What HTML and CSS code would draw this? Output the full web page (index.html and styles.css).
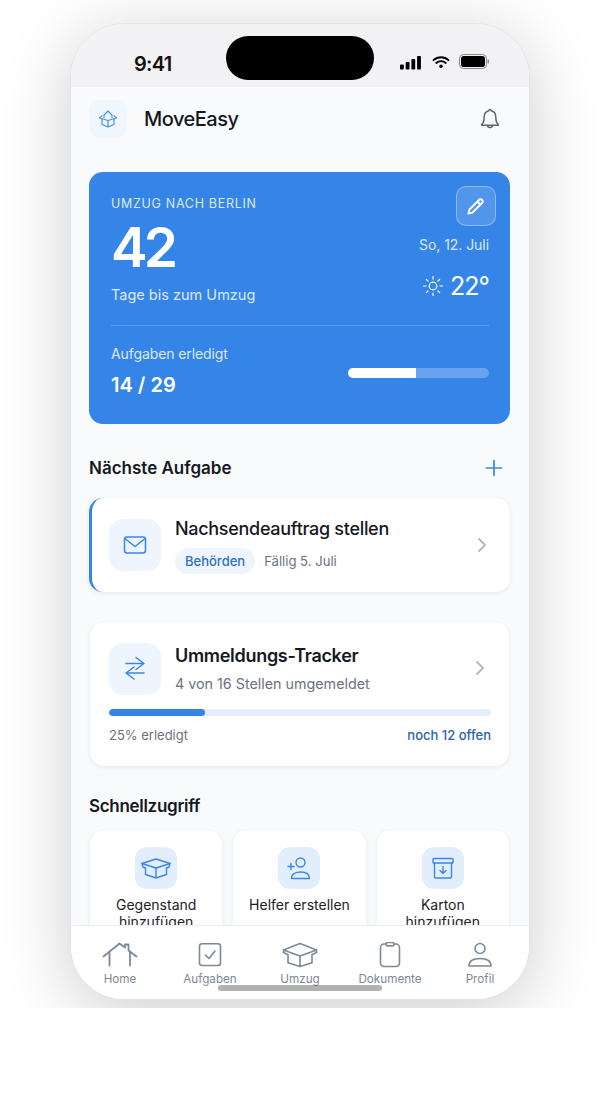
FILE: index.html
```html
<!DOCTYPE html>
<html lang="de">
<head>
<meta charset="utf-8">
<title>MoveEasy</title>
<link rel="stylesheet" href="styles.css">
</head>
<body>
<div class="stage">
<div class="phone">
  <div class="status">
    <span class="time">9:41</span>
    <div class="island"></div>
    <div class="status-icons">
      <svg width="22" height="15" viewBox="0 0 22 15"><rect x="0" y="9.500" width="3.800" height="5" rx=".8"/><rect x="5.700" y="7" width="3.800" height="7.500" rx=".8"/><rect x="11.400" y="4" width="3.800" height="10.500" rx=".8"/><rect x="17.100" y="1" width="3.800" height="13.500" rx=".8"/></svg>
      <svg width="18" height="14" viewBox="0 0 18 14" class="wifi"><path d="M1.500 5.200a11 11 0 0 1 15 0M4.200 8a7 7 0 0 1 9.600 0" fill="none" stroke="#000" stroke-width="1.800" stroke-linecap="round"/><circle cx="9" cy="11.200" r="1.700"/></svg>
      <svg width="31" height="16" viewBox="0 0 31 16"><rect x=".5" y=".5" width="27" height="14" rx="4" fill="none" stroke="#8a8a8e"/><rect x="2" y="2" width="24" height="11" rx="2.800"/><rect x="28.600" y="5.500" width="1.400" height="4" rx=".7" fill="#8a8a8e"/></svg>
    </div>
  </div>
  <div class="screen">
    <header class="app-head">
      <div class="logo">
        <svg width="20" height="20" viewBox="0 0 20 20" fill="none" stroke="#4a90e2" stroke-width="1.200" stroke-linejoin="round" stroke-linecap="round"><path d="M10 11.500 1.500 9l2.500-2.400M16 6.600 18.500 9 10 11.500"/><path d="M4 10.200v5.300l6 2.500 6-2.500v-5.300M10 11.500V18"/><path d="M6 8.500V6.200L10 2l4 4.200v2.300"/></svg>
      </div>
      <span class="brand">MoveEasy</span>
      <svg class="bell" width="24" height="24" viewBox="0 0 24 24" fill="none" stroke="#5c6470" stroke-width="1.500" stroke-linejoin="round" stroke-linecap="round"><path d="M12 2.500a1.200 1.200 0 0 1 1.200 1.300c3 .7 4.600 3.200 4.600 6.200 0 4 .8 6 2.400 7.300.4.400.2 1-.4 1H4.200c-.6 0-.8-.6-.4-1C5.400 16 6.200 14 6.200 10c0-3 1.600-5.500 4.600-6.200A1.200 1.200 0 0 1 12 2.500z"/><path d="M9.300 18.500a2.800 2.800 0 0 0 5.400 0"/></svg>
    </header>

    <section class="hero">
      <div class="hero-top">
        <div class="hero-left">
          <div class="eyebrow">UMZUG NACH BERLIN</div>
          <div class="count">42</div>
          <div class="count-label">Tage bis zum Umzug</div>
        </div>
        <div class="hero-right">
          <div class="edit">
            <svg width="20" height="20" viewBox="0 0 20 20" fill="none" stroke="#fff" stroke-width="2" stroke-linejoin="round" stroke-linecap="round"><path d="M2.500 17.500l.9-3.900L13.200 3.800a1.900 1.900 0 0 1 2.700 0l.3.300a1.900 1.900 0 0 1 0 2.700l-9.800 9.800z"/><path d="M11.500 5.700l2.800 2.800"/></svg>
          </div>
          <div class="date">So, 12. Juli</div>
          <div class="weather">
            <svg width="22" height="22" viewBox="0 0 22 22" fill="none" stroke="#fff" stroke-width="1.200" stroke-linecap="round"><circle cx="11" cy="11" r="3.800"/><path d="M11 1.500v2.500M11 18v2.500M1.500 11H4M18 11h2.500M4.300 4.300 6 6M16 16l1.700 1.700M4.300 17.700 6 16M16 6l1.700-1.700"/></svg>
            <span>22°</span>
          </div>
        </div>
      </div>
      <div class="hero-bottom">
        <div>
          <div class="done-label">Aufgaben erledigt</div>
          <div class="done-count">14 / 29</div>
        </div>
        <div class="hero-bar"><div class="hero-fill"></div></div>
      </div>
    </section>

    <div class="sec-head">
      <h2 class="sec-title">Nächste Aufgabe</h2>
      <svg width="18" height="18" viewBox="0 0 18 18" stroke="#3a86e4" stroke-width="1.700" stroke-linecap="round"><path d="M9 1.500v15M1.500 9h15"/></svg>
    </div>

    <article class="card task">
      <div class="tile">
        <svg width="26" height="26" viewBox="0 0 26 26" fill="none" stroke="#3a86e4" stroke-width="1.500" stroke-linejoin="round" stroke-linecap="round"><rect x="2.500" y="5" width="21" height="16" rx="2.500"/><path d="M3.500 7 13 14.500 22.500 7"/></svg>
      </div>
      <div class="body">
        <div class="task-title">Nachsendeauftrag stellen</div>
        <div class="task-meta"><span class="pill">Behörden</span><span class="due">Fällig 5. Juli</span></div>
      </div>
      <svg class="chev" width="12" height="18" viewBox="0 0 12 18" fill="none" stroke="#b3b8c0" stroke-width="1.800" stroke-linecap="round" stroke-linejoin="round"><path d="M3 3l6 6-6 6"/></svg>
    </article>

    <article class="card tracker">
      <div class="tracker-top">
        <div class="tile">
          <svg width="26" height="26" viewBox="0 0 26 26" fill="none" stroke="#3a86e4" stroke-width="1.500" stroke-linejoin="round" stroke-linecap="round"><path d="M4 7.500h18M14 1.500l8 6-8 6M22 17H4M12 11l-8 6 8 6"/></svg>
        </div>
        <div class="body">
          <div class="tracker-title">Ummeldungs-Tracker</div>
          <div class="tracker-sub">4 von 16 Stellen umgemeldet</div>
        </div>
        <svg class="chev" width="12" height="18" viewBox="0 0 12 18" fill="none" stroke="#b3b8c0" stroke-width="1.800" stroke-linecap="round" stroke-linejoin="round"><path d="M3 3l6 6-6 6"/></svg>
      </div>
      <div class="track"><div class="track-fill"></div></div>
      <div class="track-foot"><span>25% erledigt</span><span class="open">noch 12 offen</span></div>
    </article>

    <h2 class="sec-title quick-title">Schnellzugriff</h2>
    <div class="quick">
      <div class="qcard">
        <div class="qicon"><svg width="30" height="21" viewBox="0 0 30 21" fill="none" stroke="#3a86e4" stroke-width="1.400" stroke-linejoin="round" stroke-linecap="round"><path d="M15 1 1 5.500 15 10 29 5.500z"/><path d="M1 5.500 2 9l2.500 1v6.500L15 20l10.500-3.500V10L28 9l1-3.500M15 10v10"/></svg></div>
        <div class="qlabel">Gegenstand hinzufügen</div>
      </div>
      <div class="qcard">
        <div class="qicon"><svg width="24" height="24" viewBox="0 0 24 24" fill="none" stroke="#3a86e4" stroke-width="1.400" stroke-linejoin="round" stroke-linecap="round"><circle cx="13.500" cy="6.500" r="4.500"/><path d="M4.500 22.500c0-4.500 4-6.500 9-6.500s9 2 9 6.500z"/><path d="M1 10.500h6M4 7.500v6"/></svg></div>
        <div class="qlabel">Helfer erstellen</div>
      </div>
      <div class="qcard">
        <div class="qicon"><svg width="22" height="22" viewBox="0 0 22 22" fill="none" stroke="#3a86e4" stroke-width="1.400" stroke-linejoin="round" stroke-linecap="round"><rect x="1" y="1.500" width="20" height="4.500" rx=".8"/><path d="M2.500 6v14a1 1 0 0 0 1 1h15a1 1 0 0 0 1-1V6"/><path d="M11 9.500v7M8 13.500l3 3 3-3"/></svg></div>
        <div class="qlabel">Karton hinzufügen</div>
      </div>
    </div>
  </div>
  <nav class="tabbar">
    <div class="tab">
      <svg width="36" height="26" viewBox="0 0 36 26" fill="none" stroke="#7f8895" stroke-width="1.800" stroke-linejoin="round" stroke-linecap="round"><path d="M1.500 14.500 17.500 1.500l5.500 4V2.500h3.500v6L34.500 14.500"/><path d="M7.500 10v13.500M28 9.500v14"/></svg>
      <span>Home</span>
    </div>
    <div class="tab">
      <svg width="36" height="26" viewBox="0 0 36 26" fill="none" stroke="#7f8895" stroke-width="1.600" stroke-linejoin="round" stroke-linecap="round"><rect x="7.500" y="1.800" width="21" height="21.700" rx="2.500"/><path d="M13.500 13l3.500 3.500 6-7.500"/></svg>
      <span>Aufgaben</span>
    </div>
    <div class="tab">
      <svg width="36" height="26" viewBox="0 0 36 26" fill="none" stroke="#7f8895" stroke-width="1.600" stroke-linejoin="round" stroke-linecap="round"><path d="M18 1.500 1.500 8 18 14l16.500-6z"/><path d="M1.500 8v2.500l4.500 2.300v8L18 24.500l12-3.700v-8l4.500-2.300V8M18 14v10.500"/></svg>
      <span>Umzug</span>
    </div>
    <div class="tab">
      <svg width="36" height="26" viewBox="0 0 36 26" fill="none" stroke="#7f8895" stroke-width="1.600" stroke-linejoin="round" stroke-linecap="round"><rect x="8.500" y="2" width="19" height="22.500" rx="3.500"/><rect x="14" y="0.500" width="8" height="3.400" rx="1.700" fill="#fff"/></svg>
      <span>Dokumente</span>
    </div>
    <div class="tab">
      <svg width="36" height="26" viewBox="0 0 36 26" fill="none" stroke="#7f8895" stroke-width="1.600" stroke-linejoin="round" stroke-linecap="round"><circle cx="18" cy="6.500" r="5"/><path d="M7 24c0-5 4.500-7.500 11-7.500S29 19 29 24z"/></svg>
      <span>Profil</span>
    </div>
    <div class="home-bar"></div>
  </nav>
</div>
</div>
</body>
</html>
```
FILE: styles.css
```css
* { box-sizing: border-box; }
html, body { margin: 0; padding: 0; background: #fff; }
body { font-family: "Inter", "Noto Sans", sans-serif; color: #14181f; }
.stage { width: 600px; height: 1008px; overflow: hidden; padding: 23px 70px 0; background: #fff; position: relative; }
.phone { width: 460px; height: 977px; border-radius: 54px; background: #f8fafc; box-shadow: 0 12px 70px rgba(0,0,0,.2); border: 1px solid #e2e3e6; display: flex; flex-direction: column; overflow: hidden; position: relative; }
.status { height: 63px; flex: none; background: #f2f2f5; display: flex; align-items: center; padding: 16px 0 0; position: relative; }
.time { font-size: 20px; font-weight: 600; letter-spacing: -.7px; margin-left: 63px; color: #111; }
.island { position: absolute; left: 155px; top: 12px; width: 148px; height: 44px; background: #000; border-radius: 22px; }
.status-icons { position: absolute; right: 39px; top: 30px; display: flex; align-items: center; gap: 9px; }
.wifi { margin-left: 1px; }
.screen { flex: 1; min-height: 0; overflow: hidden; padding: 0 19px 0 18px; }
.app-head { display: flex; align-items: center; height: 85px; padding-bottom: 22px; }
.logo { width: 38px; height: 38px; border-radius: 11px; background: #eff6fe; display: flex; align-items: center; justify-content: center; margin-right: 17px; }
.brand { font-size: 20px; font-weight: 500; letter-spacing: -.5px; }
.bell { margin-left: auto; margin-right: 8px; }
.hero { height: 252px; border-radius: 14px; background: #3585e8; color: #fff; padding: 14px 21px 0 22px; }
.hero-top { display: flex; justify-content: space-between; height: 140px; border-bottom: 1px solid rgba(255,255,255,.22); }
.eyebrow { font-size: 12.500px; letter-spacing: .7px; color: #dbe9fb; margin-top: 10px; line-height: 15px; }
.count { font-size: 55px; font-weight: 600; line-height: 60px; letter-spacing: -4px; margin-top: 6px; }
.count-label { font-size: 14.500px; color: #dbe9fb; margin-top: 9px; }
.hero-right { display: flex; flex-direction: column; align-items: flex-end; }
.edit { width: 40px; height: 40px; border-radius: 10px; background: rgba(255,255,255,.14); border: 1px solid rgba(255,255,255,.35); margin-right: -7px; display: flex; align-items: center; justify-content: center; }
.date { font-size: 14px; letter-spacing: -.05px; color: #dbe9fb; margin-top: 10px; }
.weather { display: flex; align-items: center; gap: 6px; font-size: 25px; letter-spacing: -1px; margin-top: 18px; }
.hero-bottom { display: flex; justify-content: space-between; align-items: center; padding-top: 19px; }
.done-label { font-size: 14px; letter-spacing: -.1px; color: #dbe9fb; }
.done-count { font-size: 20px; font-weight: 600; margin-top: 11px; }
.hero-bar { width: 141px; height: 10px; border-radius: 5px; background: rgba(255,255,255,.25); overflow: hidden; margin-top: 3px; }
.hero-fill { width: 48%; height: 100%; background: #fff; }
.sec-head { display: flex; justify-content: space-between; align-items: center; margin-top: 32px; padding-right: 7px; }
.sec-title { font-size: 17px; font-weight: 600; margin: 0; line-height: 24px; }
.card { background: #fff; border-radius: 14px; box-shadow: 0 1px 4px rgba(30,50,80,.09); }
.task { height: 94px; margin-top: 18px; border-left: 3px solid #3585e8; padding: 0 22px 0 17px; display: flex; align-items: center; }
.tile { width: 52px; height: 52px; border-radius: 14px; background: #eef5fe; flex: none; display: flex; align-items: center; justify-content: center; }
.body { flex: 1; margin-left: 14px; }
.task-title { font-size: 18px; font-weight: 500; line-height: 24px; letter-spacing: -.3px; }
.task-meta { display: flex; align-items: center; gap: 9px; margin-top: 7px; }
.pill { background: #eef5fe; color: #2f6fc4; font-size: 13px; font-weight: 500; border-radius: 13px; padding: 0 10px; line-height: 26px; }
.due { color: #6b7280; font-size: 13.100px; }
.tracker { height: 144px; margin-top: 30px; margin-left: 1px; margin-right: 1px; padding: 21px 18px 0 19px; }
.tracker-top { display: flex; align-items: center; }
.tracker-top .body { margin-top: -2px; }
.tracker-top .chev { margin-right: 5px; margin-top: -2px; }
.tracker-title { font-size: 18px; font-weight: 600; line-height: 24px; letter-spacing: -.3px; }
.tracker-sub { font-size: 14.300px; color: #6b7280; margin-top: 7px; }
.track { height: 7px; border-radius: 4px; background: #e3edfb; margin-top: 14px; overflow: hidden; }
.track-fill { width: 25%; height: 100%; background: #3585e8; border-radius: 4px; }
.track-foot { display: flex; justify-content: space-between; font-size: 13px; color: #6b7280; margin-top: 11px; }
.open { color: #2a62ad; font-weight: 500; }
.quick-title { margin-top: 28px; letter-spacing: -.3px; }
.quick { display: grid; grid-template-columns: repeat(3, 1fr); gap: 11px; margin: 12px 1px 0; }
.qcard { background: #fff; border-radius: 14px; box-shadow: 0 1px 4px rgba(30,50,80,.09); padding: 17px 8px 10px; height: 130px; text-align: center; }
.qicon { width: 42px; height: 42px; border-radius: 12px; background: #e3eefc; margin: 0 auto 7px; display: flex; align-items: center; justify-content: center; }
.qlabel { font-size: 14px; line-height: 17px; color: #1c2129; }
.tabbar { position: absolute; left: 0; right: 0; bottom: 0; height: 74px; background: #fff; border-top: 1px solid #eceef1; display: grid; grid-template-columns: repeat(5, 90px); justify-content: center; padding-top: 16px; }
.tab { display: flex; flex-direction: column; align-items: center; gap: 4px; color: #7f8895; font-size: 11.700px; line-height: 14px; }
.home-bar { position: absolute; left: 147px; bottom: 8px; width: 164px; height: 6px; border-radius: 3px; background: rgba(0,0,0,.3); }
```
